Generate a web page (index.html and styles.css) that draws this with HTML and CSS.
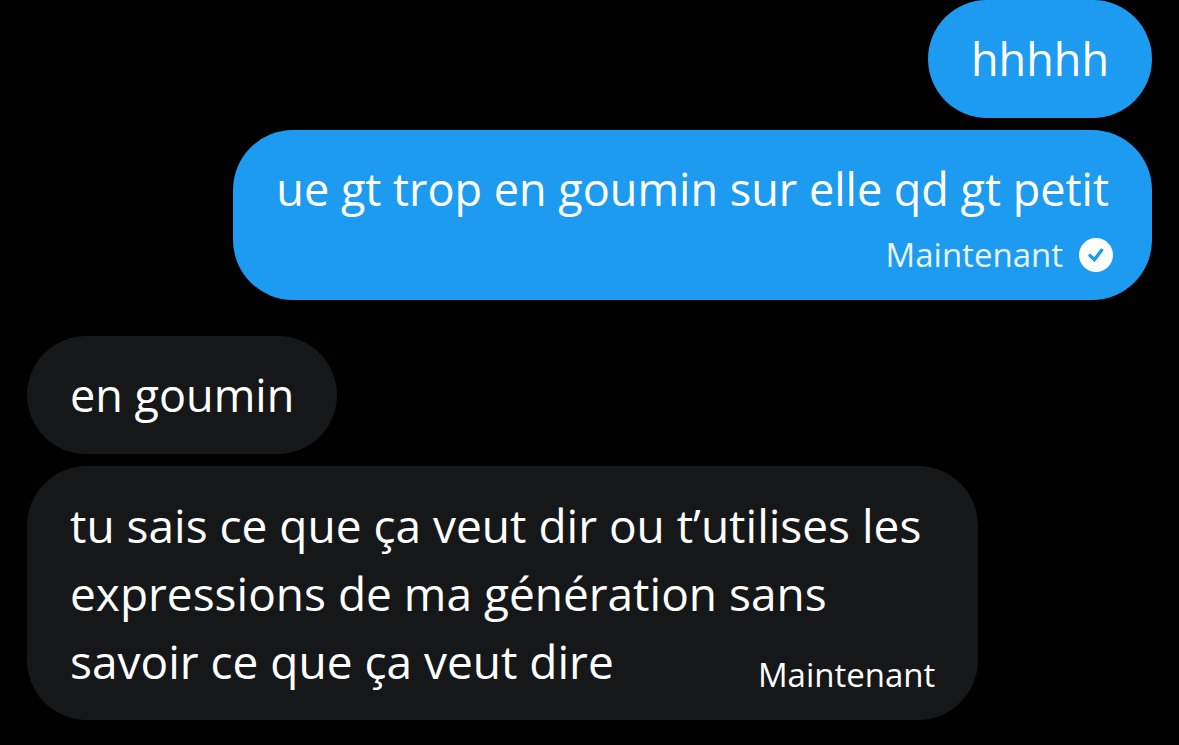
FILE: index.html
```html
<!DOCTYPE html>
<html lang="fr">
<head>
<meta charset="utf-8">
<title>Messages</title>
<link rel="stylesheet" href="styles.css">
</head>
<body>

<main class="chat">

	<section class="group sent">
		<div class="bubble"><p class="text">hhhhh</p></div>
		<div class="bubble">
			<p class="text">ue gt trop en goumin sur elle qd gt petit</p>
			<div class="meta">
				<span class="time">Maintenant</span>
				<svg class="check" viewBox="0 0 34 34" aria-hidden="true">
					<circle cx="17" cy="17" r="17" fill="#fff"/>
					<path d="M11 17.6l4.4 4.2L22.6 12.2" fill="none" stroke="#1d9bf0" stroke-width="3.4" stroke-linecap="round"/>
				</svg>
			</div>
		</div>
	</section>

	<section class="group received">
		<div class="bubble"><p class="text">en goumin</p></div>
		<div class="bubble long">
			<p class="text">tu sais ce que ça veut dir ou t’utilises les<br>expressions de ma génération sans<br>savoir ce que ça veut dire</p>
			<span class="time">Maintenant</span>
		</div>
	</section>

</main>

</body>
</html>
```
FILE: styles.css
```css
body	{ margin:0;
		  background:#000;
		  color:#fff;
		  font-family:"Open Sans", "Noto Sans", sans-serif;
}

.chat	{ padding:0 27px 24px;
}

.group	{ display:flex;
		  flex-direction:column;
		  gap:12px;
}

.sent	{ align-items:flex-end;
}

.received	{ align-items:flex-start;
		  margin-top:36px;
}

.bubble	{ box-sizing:border-box;
		  padding:25px 43px;
		  border-radius:60px;
}

.sent .bubble	{ background:#1d9bf0;
}

.received .bubble	{ background:#161719;
}

.text	{ margin:0;
		  font-size:45px;
		  line-height:68px;
		  white-space:nowrap;
}

.time	{ font-size:33px;
		  line-height:40px;
}

.meta	{ display:flex;
		  align-items:center;
		  justify-content:flex-end;
		  gap:16px;
		  margin:12px -4px 0 0;
}

.meta .time	{ color:#e8f5fe;
}

.check	{ width:34px;
		  height:34px;
}

.long	{ display:grid;
}

.long .time	{ grid-area:1 / 1;
		  align-self:end;
		  justify-self:end;
}

.long .text	{ grid-area:1 / 1;
		  padding-right:14px;
		  font-size:46px;
}
```
